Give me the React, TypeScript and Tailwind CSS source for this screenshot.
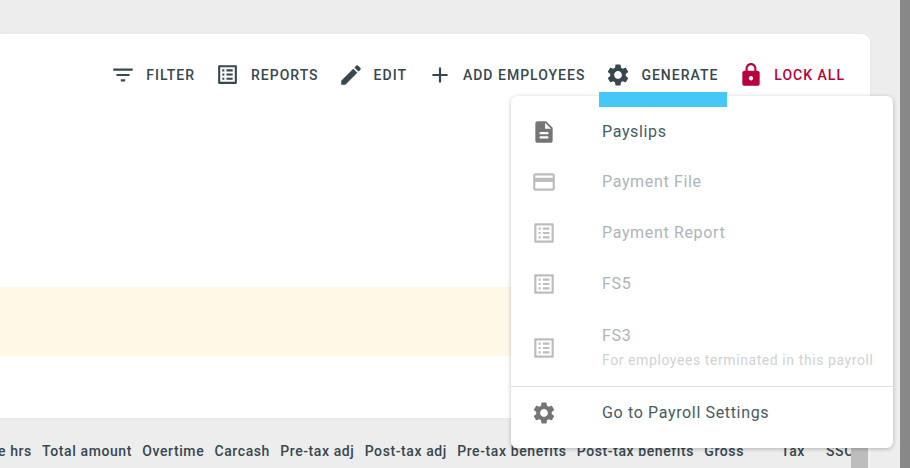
import React from "react";

const P = {
  list: "M19 5v14H5V5h14m1.1-2H3.9c-.5 0-.9.4-.9.9v16.2c0 .4.4.9.9.9h16.2c.4 0 .9-.5.9-.9V3.9c0-.5-.5-.9-.9-.9zM11 7h6v2h-6V7zm0 4h6v2h-6v-2zm0 4h6v2h-6zM7 7h2v2H7zm0 4h2v2H7zm0 4h2v2H7z",
  gear: "M19.14 12.94c.04-.3.06-.61.06-.94 0-.32-.02-.64-.07-.94l2.03-1.58a.49.49 0 0 0 .12-.61l-1.92-3.32a.488.488 0 0 0-.59-.22l-2.39.96c-.5-.38-1.03-.7-1.62-.94l-.36-2.54a.484.484 0 0 0-.48-.41h-3.84c-.24 0-.43.17-.47.41l-.36 2.54c-.59.24-1.13.57-1.62.94l-2.39-.96c-.22-.08-.47 0-.59.22L2.74 8.87c-.12.21-.08.47.12.61l2.03 1.58c-.05.3-.09.63-.09.94s.02.64.07.94l-2.03 1.58a.49.49 0 0 0-.12.61l1.92 3.32c.12.22.37.29.59.22l2.39-.96c.5.38 1.03.7 1.62.94l.36 2.54c.05.24.24.41.48.41h3.84c.24 0 .44-.17.47-.41l.36-2.54c.59-.24 1.13-.56 1.62-.94l2.39.96c.22.08.47 0 .59-.22l1.92-3.32c.12-.22.07-.47-.12-.61l-2.01-1.58zM12 15.6c-1.98 0-3.6-1.62-3.6-3.6s1.62-3.6 3.6-3.6 3.6 1.62 3.6 3.6-1.62 3.6-3.6 3.6z",
  filter: "M10 18h4v-2h-4v2zM3 6v2h18V6H3zm3 7h12v-2H6v2z",
  edit: "M3 17.25V21h3.75L17.81 9.94l-3.75-3.75L3 17.25zM20.71 7.04a.996.996 0 0 0 0-1.41l-2.34-2.34a.996.996 0 0 0-1.41 0l-1.83 1.83 3.75 3.75 1.83-1.83z",
  plus: "M19 13h-6v6h-2v-6H5v-2h6V5h2v6h6v2z",
  lock: "M18 8h-1V6c0-2.76-2.24-5-5-5S7 3.24 7 6v2H6c-1.1 0-2 .9-2 2v10c0 1.1.9 2 2 2h12c1.1 0 2-.9 2-2V10c0-1.1-.9-2-2-2zm-6 9c-1.1 0-2-.9-2-2s.9-2 2-2 2 .9 2 2-.9 2-2 2zm3.1-9H8.9V6c0-1.71 1.39-3.1 3.1-3.1s3.1 1.39 3.1 3.1v2z",
  doc: "M14 2H6c-1.1 0-1.99.9-1.99 2L4 20c0 1.1.89 2 1.99 2H18c1.1 0 2-.9 2-2V8l-6-6zm2 16H8v-2h8v2zm0-4H8v-2h8v2zm-3-5V3.5L18.5 9H13z",
  card: "M20 4H4c-1.11 0-1.99.89-1.99 2L2 18c0 1.11.89 2 2 2h16c1.11 0 2-.89 2-2V6c0-1.11-.89-2-2-2zm0 14H4v-6h16v6zm0-10H4V6h16v2z",
};

function Icon({ d, className }: { d: string; className: string }) {
  return (
    <svg viewBox="0 0 24 24" className={className} fill="currentColor">
      <path d={d} />
    </svg>
  );
}

function ToolItem({ d, label, red, small, pull }: { d: string; label: string; red?: boolean; small?: boolean; pull?: boolean }) {
  return (
    <div className={`flex items-center ${pull ? "-ml-px" : ""} ${small ? "gap-[11px]" : "gap-2.5"} ${red ? "text-[#b8003a]" : "text-[#37474f]"}`}>
      <Icon d={d} className={small ? "w-[25px] h-[25px]" : "w-[26px] h-[26px]"} />
      <span className="text-sm font-medium tracking-[1px] leading-6">{label}</span>
    </div>
  );
}

function MenuRow({ d, label, sub, disabled, h, iconColor }: { d: string; label: string; sub?: string; disabled?: boolean; h: string; iconColor: string }) {
  return (
    <div className={`flex items-center ${h} pl-[20px]`}>
      <Icon d={d} className={`w-[26px] h-[26px] shrink-0 ${iconColor}`} />
      <div className="ml-[45px] flex flex-col">
        <span className={`text-base leading-6 tracking-[0.65px] ${disabled ? "text-[#aeb4b7]" : "text-[#455a64]"}`}>{label}</span>
        {sub && <span className="text-sm leading-6 tracking-[0.58px] text-[#cfd2d4] whitespace-nowrap">{sub}</span>}
      </div>
    </div>
  );
}

const cols = ["e hrs", "Total amount", "Overtime", "Carcash", "Pre-tax adj", "Post-tax adj", "Pre-tax benefits", "Post-tax benefits", "Gross"];

export default function App() {
  return (
    <div className="relative w-[910px] h-[468px] overflow-hidden bg-[#ededed] flex font-['Roboto',sans-serif]">
      <div className="w-[870px] shrink-0 pt-[34px] flex flex-col">
        <div className="h-[384px] bg-white rounded-tr-lg shadow-[0_0_2px_rgba(0,0,0,0.08)] flex flex-col">
          <div className="h-[81px] flex items-center justify-end pr-[25px]">
            <div className="flex items-center gap-5">
              <ToolItem d={P.filter} label="FILTER" />
              <ToolItem d={P.list} label="REPORTS" small />
              <ToolItem d={P.edit} label="EDIT" pull />
              <ToolItem d={P.plus} label="ADD EMPLOYEES" />
              <ToolItem d={P.gear} label="GENERATE" />
              <ToolItem d={P.lock} label="LOCK ALL" red />
            </div>
          </div>
          <div className="h-[172px]" />
          <div className="h-[69px] bg-[#fff8e7]" />
        </div>
        <div className="flex h-[50px] items-start">
          <div className="w-[851px] shrink-0 overflow-hidden whitespace-nowrap pt-[23px] text-sm leading-5 font-medium tracking-[0.6px] text-[#37474f] flex">
            <div className="flex gap-[10.2px] shrink-0 -ml-[2px]">
              {cols.map((c) => (
                <span key={c}>{c}</span>
              ))}
            </div>
            <span className="ml-[37px] shrink-0">Tax</span>
            <span className="ml-[21px] shrink-0">SSC</span>
          </div>
          <div className="w-[17px] h-full bg-[#bdbdbd] shrink-0" />
          <div className="w-px h-full bg-[#f7f7f7] ml-px shrink-0" />
        </div>
      </div>
      <div className="flex-1 flex justify-end">
        <div className="w-[10px] bg-[#888888]" />
      </div>

      <div className="absolute left-[511px] top-[96px] w-[382px] h-[352px] bg-white rounded-md shadow-[0_1px_4px_rgba(0,0,0,0.25)] flex flex-col pt-[11px]">
        <MenuRow d={P.doc} label="Payslips" h="h-[49px]" iconColor="text-[#757575]" />
        <MenuRow d={P.card} label="Payment File" disabled h="h-[51px]" iconColor="text-[#bdbdbd]" />
        <MenuRow d={P.list} label="Payment Report" disabled h="h-[51px]" iconColor="text-[#bdbdbd]" />
        <MenuRow d={P.list} label="FS5" disabled h="h-[51px]" iconColor="text-[#bdbdbd]" />
        <MenuRow d={P.list} label="FS3" sub="For employees terminated in this payroll" disabled h="h-[77px]" iconColor="text-[#bdbdbd]" />
        <div className="h-px bg-[#e0e0e0]" />
        <MenuRow d={P.gear} label="Go to Payroll Settings" h="h-[51px]" iconColor="text-[#757575]" />
      </div>

      <div className="absolute left-[599px] top-[92px] w-[128px] h-[15px] bg-[#45c8f8]" />
    </div>
  );
}
